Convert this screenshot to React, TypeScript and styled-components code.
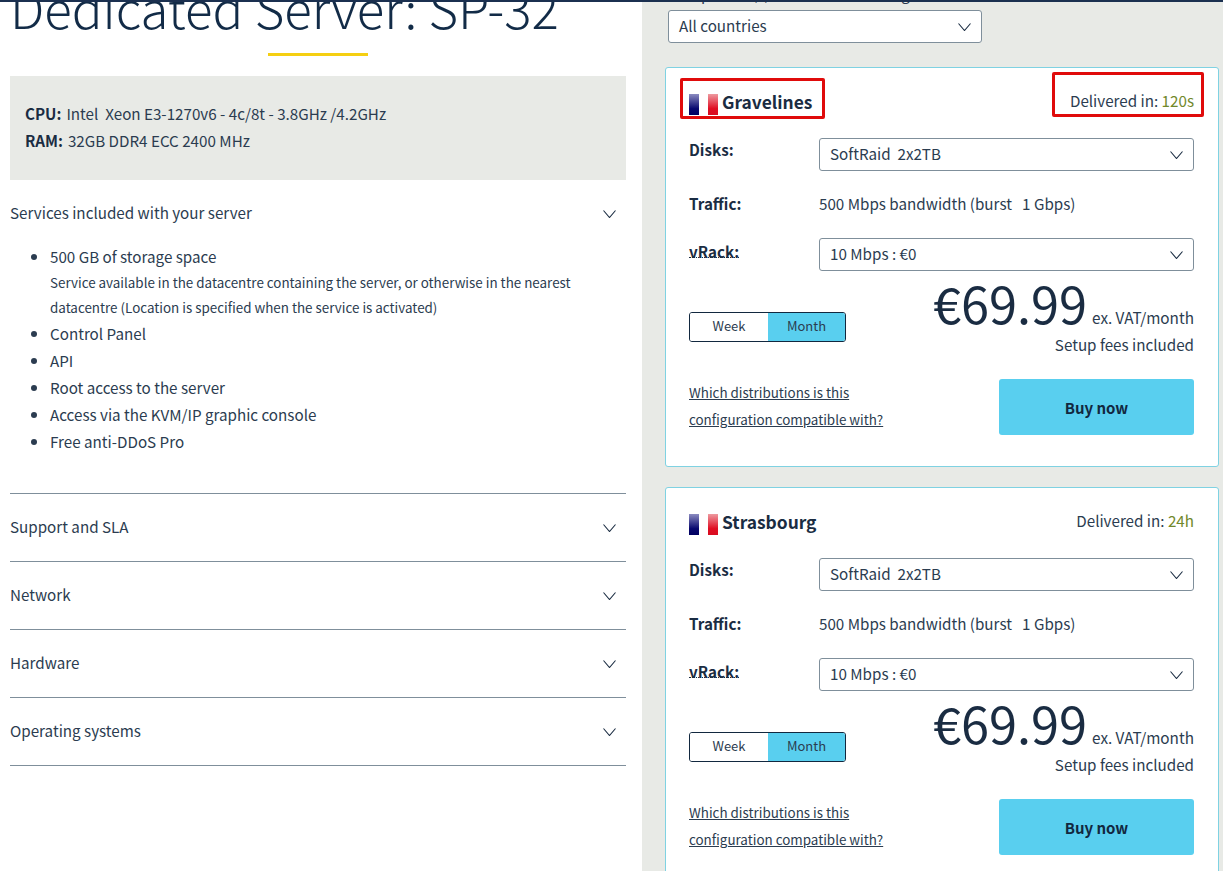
import React from 'react';
import styled, { createGlobalStyle } from 'styled-components';

const Global = createGlobalStyle`
  html, body { margin: 0; padding: 0; background: #fff; }
  body { font-family: "Noto Sans CJK SC", "Noto Sans", sans-serif; color: #1a2c42; overflow: hidden; }
  * { box-sizing: border-box; }
`;

const Page = styled.div`
  position: relative;
  display: grid;
  grid-template-columns: 642px 1fr;
  height: 871px;
  overflow: hidden;
`;
const TopBar = styled.div`
  position: absolute;
  top: 0; left: 0; right: 0;
  height: 2px;
  background: #1b3050;
`;
const Left = styled.main`
  padding-left: 10px;
  padding-right: 16px;
`;
const Title = styled.h1`
  margin: -23px 0 0;
  font-size: 51px;
  line-height: 60px;
  font-weight: 300;
  white-space: nowrap;
  color: #122b47;
`;
const Accent = styled.div`
  width: 100px;
  height: 3px;
  margin: 16px 0 20px 258px;
  background: #f5cf12;
`;
const SpecBox = styled.div`
  background: #e8eae6;
  height: 104px;
  padding: 24px 15px;
  font-size: 15.2px;
  line-height: 27px;
`;
const Spec = styled.div`
  color: #2b3c50;
`;
const SpecKey = styled.b`
  font-weight: 700;
  color: #1a2c42;
  margin-right: 5px;
`;
const Section = styled.section`
  border-bottom: 1px solid #7f8f9b;
`;
const SectionHead = styled.div`
  display: flex;
  align-items: center;
  justify-content: space-between;
  height: 67px;
  padding-right: 10px;
  font-size: 15.2px;
  color: #2b3c50;
`;
const SectionTitle = styled.span`
  margin-bottom: 4px;
`;
const Chev = styled.svg`
  width: 13px;
  height: 8px;
  flex: none;
  fill: none;
  stroke: #1a2c42;
  stroke-width: 1.1;
`;
const Bullets = styled.ul`
  margin: -4px 0 0;
  padding: 0 0 38px 40px;
  font-size: 15.2px;
  line-height: 27px;
  color: #2b3c50;
`;
const Note = styled.div`
  font-size: 13.4px;
  line-height: 25px;
`;
const Right = styled.aside`
  background: #e8eae6;
  padding: 0 4px 0 23px;
`;
const FilterLabel = styled.div`
  height: 28px;
  margin-top: -18px;
  padding-left: 3px;
  font-size: 15.2px;
  line-height: 22px;
  white-space: nowrap;
  color: #2b3c50;
`;
const Select = styled.div<{ $w?: number }>`
  display: flex;
  align-items: center;
  justify-content: space-between;
  width: ${p => (p.$w ? `${p.$w}px` : '100%')};
  height: 33px;
  padding: 0 10px;
  background: #fff;
  border: 1px solid #7f8f9b;
  border-radius: 3px;
  font-size: 15.2px;
  color: #2b3c50;
`;
const Filter = styled.div`
  margin: 0 0 24px 3px;
`;
const Card = styled.article`
  position: relative;
  height: 400px;
  margin-bottom: 20px;
  padding: 21px 24px 0 23px;
  background: #fff;
  border: 1px solid #7fd2e2;
  border-radius: 3px;
`;
const CardHead = styled.div`
  display: flex;
  justify-content: space-between;
  align-items: flex-start;
  height: 49px;
`;
const Place = styled.div`
  display: flex;
  align-items: center;
  gap: 4px;
  margin-top: -1px;
  font-size: 17.4px;
  line-height: 24px;
  font-weight: 700;
  color: #1a2c42;
`;
const FlagArt = styled.svg`
  flex: none;
  margin-top: 6px;
`;
const Delivery = styled.div`
  font-size: 15.2px;
  line-height: 22px;
  color: #2b3c50;
`;
const Time = styled.span`
  color: #71882a;
`;
const Row = styled.div<{ $h: number }>`
  display: grid;
  grid-template-columns: 130px 1fr;
  height: ${p => p.$h}px;
  font-size: 15.2px;
  color: #2b3c50;
`;
const RowLabel = styled.div`
  font-weight: 700;
  line-height: 22px;
  color: #1a2c42;
`;
const Dotted = styled.span`
  display: block;
  width: fit-content;
  margin-top: 7px;
  border-bottom: 1px dotted #1a2c42;
  line-height: 12px;
`;
const RowValue = styled.div`
  line-height: 22px;
`;
const PriceRow = styled.div`
  display: flex;
  justify-content: space-between;
  align-items: flex-start;
  height: 100px;
`;
const Toggle = styled.div`
  display: grid;
  grid-template-columns: 78px 1fr;
  width: 157px;
  height: 30px;
  margin-top: 33px;
  border: 1px solid #12283f;
  border-radius: 3px;
  overflow: hidden;
  font-size: 13px;
`;
const ToggleOption = styled.div<{ $on?: boolean }>`
  display: flex;
  align-items: center;
  justify-content: center;
  padding-bottom: 4px;
  background: ${p => (p.$on ? '#59cfef' : '#fff')};
  color: #2b3c50;
`;
const PriceBox = styled.div`
  margin-top: -4px;
  text-align: right;
`;
const PriceLine = styled.div`
  display: flex;
  align-items: baseline;
  justify-content: flex-end;
  gap: 5px;
  height: 54px;
  font-size: 15.3px;
  line-height: 54px;
  color: #2b3c50;
`;
const Amount = styled.span`
  font-size: 50.5px;
  color: #1a2c42;
`;
const Fees = styled.div`
  margin-top: 2px;
  font-size: 15.2px;
  line-height: 27px;
  color: #2b3c50;
`;
const BottomRow = styled.div`
  display: flex;
  justify-content: space-between;
  align-items: flex-start;
`;
const Compat = styled.a`
  font-size: 13.4px;
  line-height: 27px;
  text-decoration: underline;
  color: #2b3c50;
`;
const Buy = styled.button`
  width: 195px;
  height: 56px;
  border: 0;
  border-radius: 3px;
  background: #59cfef;
  font: 700 15px "Noto Sans CJK SC", "Noto Sans", sans-serif;
  color: #12283f;
`;
const Highlight = styled.div<{ $l: number; $t: number; $w: number; $h: number }>`
  position: absolute;
  left: ${p => p.$l}px;
  top: ${p => p.$t}px;
  width: ${p => p.$w}px;
  height: ${p => p.$h}px;
  border: 3px solid #e00b0b;
  border-radius: 2px;
`;

const Chevron = () => (
  <Chev viewBox="0 0 13 8"><path d="M.5.5 6.5 7.5 12.5.5" /></Chev>
);

const Flag = ({ id }: { id: string }) => (
  <FlagArt width="29" height="21" viewBox="0 0 29 21" aria-hidden="true">
    <defs>
      <linearGradient id={`${id}b`} x1="0" y1="0" x2="0" y2="1">
        <stop offset="0" stopColor="#8b8bc0" />
        <stop offset="0.7" stopColor="#08086e" />
        <stop offset="1" stopColor="#000060" />
      </linearGradient>
      <linearGradient id={`${id}r`} x1="0" y1="0" x2="0" y2="1">
        <stop offset="0" stopColor="#ee9aa0" />
        <stop offset="0.7" stopColor="#e00d22" />
        <stop offset="1" stopColor="#d80c20" />
      </linearGradient>
    </defs>
    <rect x="0" y="0" width="10" height="21" fill={`url(#${id}b)`} />
    <rect x="19" y="0" width="10" height="21" fill={`url(#${id}r)`} />
  </FlagArt>
);

const Offer = ({ place, time, children }: { place: string; time: string; children?: React.ReactNode }) => (
  <Card>
    {children}
    <CardHead>
      <Place><Flag id={place} />{place}</Place>
      <Delivery>Delivered in: <Time>{time}</Time></Delivery>
    </CardHead>
    <Row $h={54}>
      <RowLabel>Disks:</RowLabel>
      <Select><SectionTitle>SoftRaid&nbsp; 2x2TB</SectionTitle><Chevron /></Select>
    </Row>
    <Row $h={46}>
      <RowLabel>Traffic:</RowLabel>
      <RowValue>500 Mbps bandwidth (burst &nbsp; 1 Gbps)</RowValue>
    </Row>
    <Row $h={41}>
      <RowLabel><Dotted>vRack:</Dotted></RowLabel>
      <Select><SectionTitle>10 Mbps : €0</SectionTitle><Chevron /></Select>
    </Row>
    <PriceRow>
      <Toggle>
        <ToggleOption>Week</ToggleOption>
        <ToggleOption $on>Month</ToggleOption>
      </Toggle>
      <PriceBox>
        <PriceLine><Amount>€69.99</Amount>ex. VAT/month</PriceLine>
        <Fees>Setup fees included</Fees>
      </PriceBox>
    </PriceRow>
    <BottomRow>
      <Compat href="#">Which distributions is this<br />configuration compatible with?</Compat>
      <Buy>Buy now</Buy>
    </BottomRow>
  </Card>
);

const closed = ['Support and SLA', 'Network', 'Hardware', 'Operating systems'];

export default function App() {
  return (
    <>
      <Global />
      <Page>
        <Left>
          <Title>Dedicated Server: SP-32</Title>
          <Accent />
          <SpecBox>
            <Spec><SpecKey>CPU:</SpecKey>Intel&nbsp; Xeon E3-1270v6 - 4c/8t - 3.8GHz /4.2GHz</Spec>
            <Spec><SpecKey>RAM:</SpecKey>32GB DDR4 ECC 2400 MHz</Spec>
          </SpecBox>
          <Section>
            <SectionHead><SectionTitle>Services included with your server</SectionTitle><Chevron /></SectionHead>
            <Bullets>
              <li>500 GB of storage space<Note>Service available in the datacentre containing the server, or otherwise in the nearest datacentre (Location is specified when the service is activated)</Note></li>
              <li>Control Panel</li>
              <li>API</li>
              <li>Root access to the server</li>
              <li>Access via the KVM/IP graphic console</li>
              <li>Free anti-DDoS Pro</li>
            </Bullets>
          </Section>
          {closed.map(s => (
            <Section key={s}>
              <SectionHead><SectionTitle>{s}</SectionTitle><Chevron /></SectionHead>
            </Section>
          ))}
        </Left>
        <Right>
          <FilterLabel>Component(s) available according to</FilterLabel>
          <Filter>
            <Select $w={314}><SectionTitle>All countries</SectionTitle><Chevron /></Select>
          </Filter>
          <Offer place="Gravelines" time="120s">
            <Highlight $l={14} $t={10} $w={145} $h={41} />
            <Highlight $l={386} $t={4} $w={152} $h={45} />
          </Offer>
          <Offer place="Strasbourg" time="24h" />
        </Right>
        <TopBar />
      </Page>
    </>
  );
}
